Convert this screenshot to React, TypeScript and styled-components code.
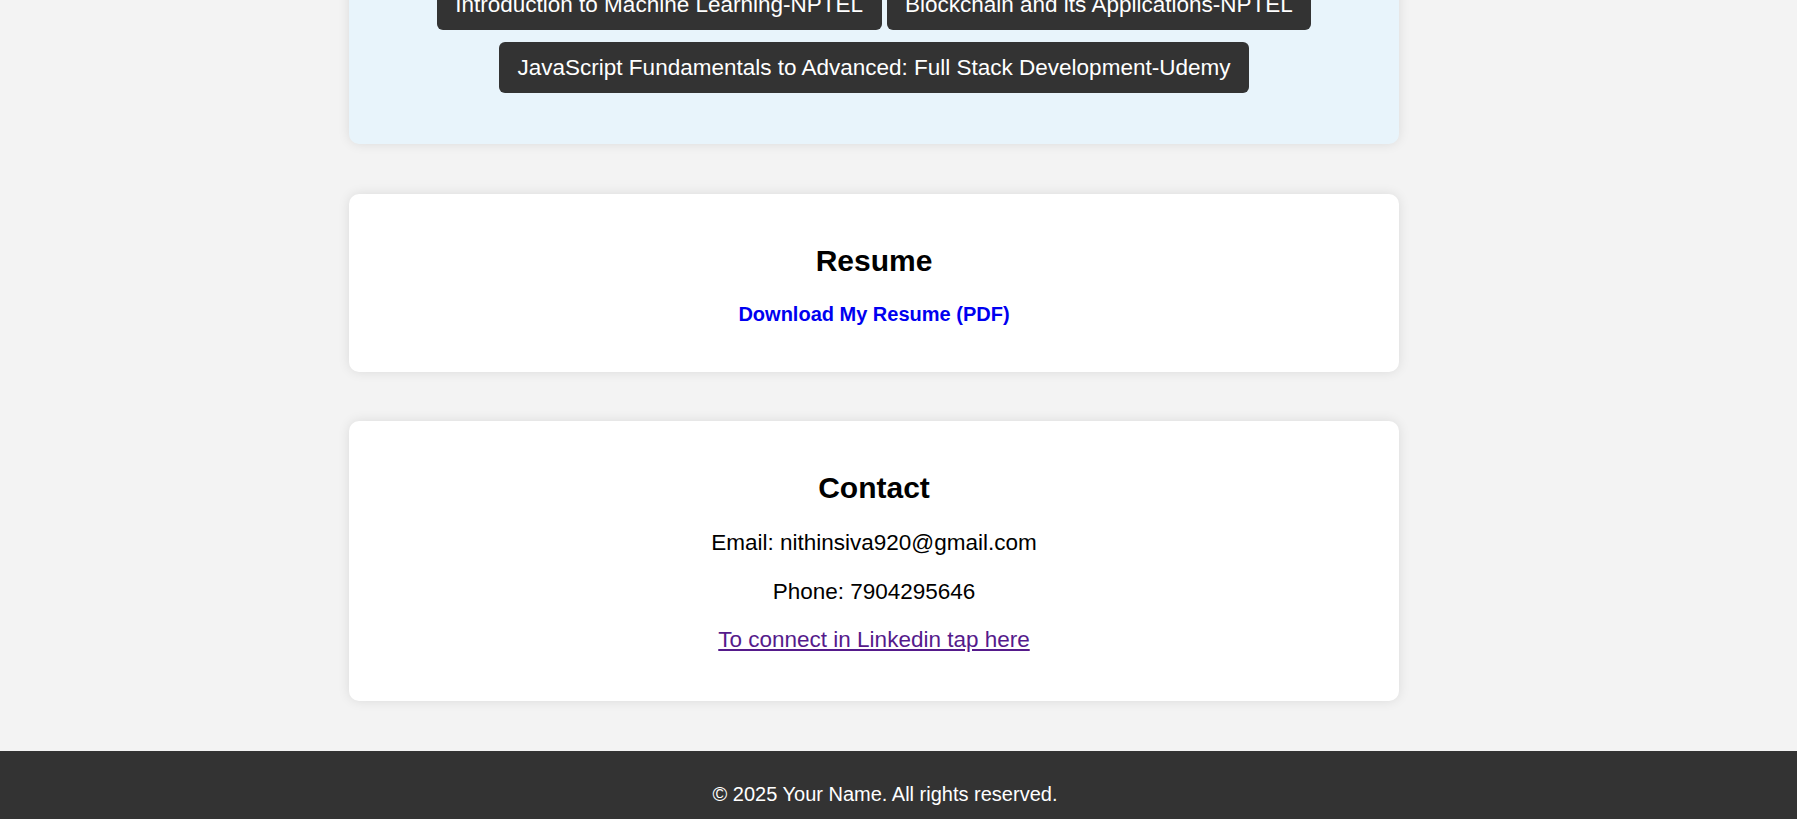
import React from "react";
import styled, { createGlobalStyle } from "styled-components";

const GlobalStyle = createGlobalStyle`
  html, body {
    margin: 0;
    padding: 0;
    background: #f3f3f3;
    font-family: "Liberation Sans", Arial, sans-serif;
    font-size: 20px;
    color: #000;
    overflow: hidden;
  }
`;

const Page = styled.div`
  display: flex;
  flex-direction: column;
  min-height: 100vh;
`;

const Main = styled.main`
  display: flex;
  flex-direction: column;
  gap: 49.5px;
  margin-top: -130px;
  padding: 0 49px 50px 0;
`;

const Card = styled.section<{ $tint?: boolean }>`
  box-sizing: border-box;
  width: 100%;
  max-width: 1050px;
  margin: 0 auto;
  padding: 25px 25px 27.5px;
  background: ${(p) => (p.$tint ? "#e8f4fb" : "#ffffff")};
  border-radius: 10px;
  box-shadow: 0 0 12px rgba(0, 0, 0, 0.1);
  text-align: center;
`;

const Heading = styled.h2`
  margin: 25px 0;
  font-size: 30px;
  font-weight: 700;
  line-height: normal;
`;

const TagList = styled.div`
  display: flex;
  flex-wrap: wrap;
  justify-content: center;
  column-gap: 5px;
  row-gap: 12px;
  margin-bottom: 23.5px;
`;

const Tag = styled.span`
  display: inline-block;
  padding: 12.5px 18.5px;
  background: #333333;
  color: #ffffff;
  border-radius: 6px;
  font-size: 22.5px;
  line-height: 26px;
`;

const ResumeRow = styled.div`
  margin: 23px 0 18.5px;
  line-height: normal;
`;

const DownloadLink = styled.a`
  color: #0000f0;
  font-weight: 700;
  text-decoration: none;
  font-size: 20px;
`;

const Line = styled.p`
  margin: 22.5px 0;
  font-size: 22.5px;
  line-height: 26px;

  &:last-child {
    margin-bottom: 20.5px;
  }
`;

const LinkedIn = styled.a`
  color: #551a8b;
  text-decoration: underline;
`;

const Footer = styled.footer`
  background: #333333;
  color: #ffffff;
  text-align: center;
  padding: 31.5px 27px 33px 0;
  line-height: normal;
`;

const certs = [
  "Introduction to Machine Learning-NPTEL",
  "Blockchain and its Applications-NPTEL",
  "JavaScript Fundamentals to Advanced: Full Stack Development-Udemy",
];

export default function App() {
  return (
    <Page>
      <GlobalStyle />
      <Main>
        <Card $tint>
          <Heading>Certifications</Heading>
          <TagList>
            {certs.map((c) => (
              <Tag key={c}>{c}</Tag>
            ))}
          </TagList>
        </Card>
        <Card>
          <Heading>Resume</Heading>
          <ResumeRow>
            <DownloadLink href="#resume">Download My Resume (PDF)</DownloadLink>
          </ResumeRow>
        </Card>
        <Card>
          <Heading>Contact</Heading>
          <Line>Email: nithinsiva920@gmail.com</Line>
          <Line>Phone: 7904295646</Line>
          <Line>
            <LinkedIn href="#linkedin">To connect in Linkedin tap here</LinkedIn>
          </Line>
        </Card>
      </Main>
      <Footer>© 2025 Your Name. All rights reserved.</Footer>
    </Page>
  );
}
